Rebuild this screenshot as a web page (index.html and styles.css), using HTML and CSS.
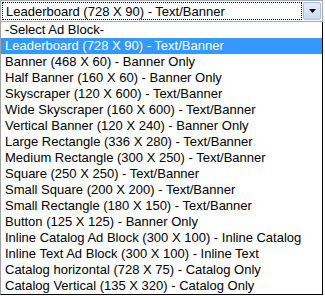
FILE: index.html
```html
<!DOCTYPE html>
<html lang="en">
<head>
  <meta charset="UTF-8">
  <meta name="viewport" content="width=device-width, initial-scale=1.0">
  <link rel="stylesheet" href="styles.css">
</head>
<body>
  <div class="combo">
    <div class="combo-field">
      <span class="combo-value">Leaderboard (728 X 90) - Text/Banner</span>
    </div>
    <div class="combo-button">
      <svg width="9" height="5" viewBox="0 0 9 5"><path d="M1 0h7L4.5 4z" fill="#000"/></svg>
    </div>
  </div>
  <ul class="options">
    <li>-Select Ad Block-</li>
    <li class="active">Leaderboard (728 X 90) - Text/Banner</li>
    <li>Banner (468 X 60) - Banner Only</li>
    <li>Half Banner (160 X 60) - Banner Only</li>
    <li>Skyscraper (120 X 600) - Text/Banner</li>
    <li>Wide Skyscraper (160 X 600) - Text/Banner</li>
    <li>Vertical Banner (120 X 240) - Banner Only</li>
    <li>Large Rectangle (336 X 280) - Text/Banner</li>
    <li>Medium Rectangle (300 X 250) - Text/Banner</li>
    <li>Square (250 X 250) - Text/Banner</li>
    <li>Small Square (200 X 200) - Text/Banner</li>
    <li>Small Rectangle (180 X 150) - Text/Banner</li>
    <li>Button (125 X 125) - Banner Only</li>
    <li>Inline Catalog Ad Block (300 X 100) - Inline Catalog</li>
    <li>Inline Text Ad Block (300 X 100) - Inline Text</li>
    <li>Catalog horizontal (728 X 75) - Catalog Only</li>
    <li>Catalog Vertical (135 X 320) - Catalog Only</li>
  </ul>
</body>
</html>
```

FILE: styles.css
```css
body {
  margin: 0;
  background: #fff;
  font-family: 'Liberation Sans', Arial, sans-serif;
  font-size: 13px;
  color: #000;
}

.combo {
  display: flex;
  width: 323px;
  height: 22px;
  box-sizing: border-box;
  border: 1px solid #a5acb5;
  padding: 1px;
}

.combo-field {
  flex: 1;
  display: flex;
  align-items: center;
  border: 1px dotted #000;
  padding-left: 3px;
  margin-right: 1px;
}

.combo-button {
  width: 16px;
  display: flex;
  align-items: center;
  justify-content: center;
  background: linear-gradient(#e3effc, #c3dcf6);
  border: 1px solid #9fc1e4;
  border-radius: 2px;
}

.options {
  list-style: none;
  margin: 0;
  padding: 0;
  width: 323px;
  box-sizing: border-box;
  border-left: 1px solid #a0a0a0;
  border-right: 1px solid #000;
  border-bottom: 1px solid #000;
}

.options li {
  height: 16px;
  line-height: 16px;
  padding-left: 4px;
  white-space: nowrap;
}

.options li.active {
  background: #3399ff;
  color: #fff;
}
```
